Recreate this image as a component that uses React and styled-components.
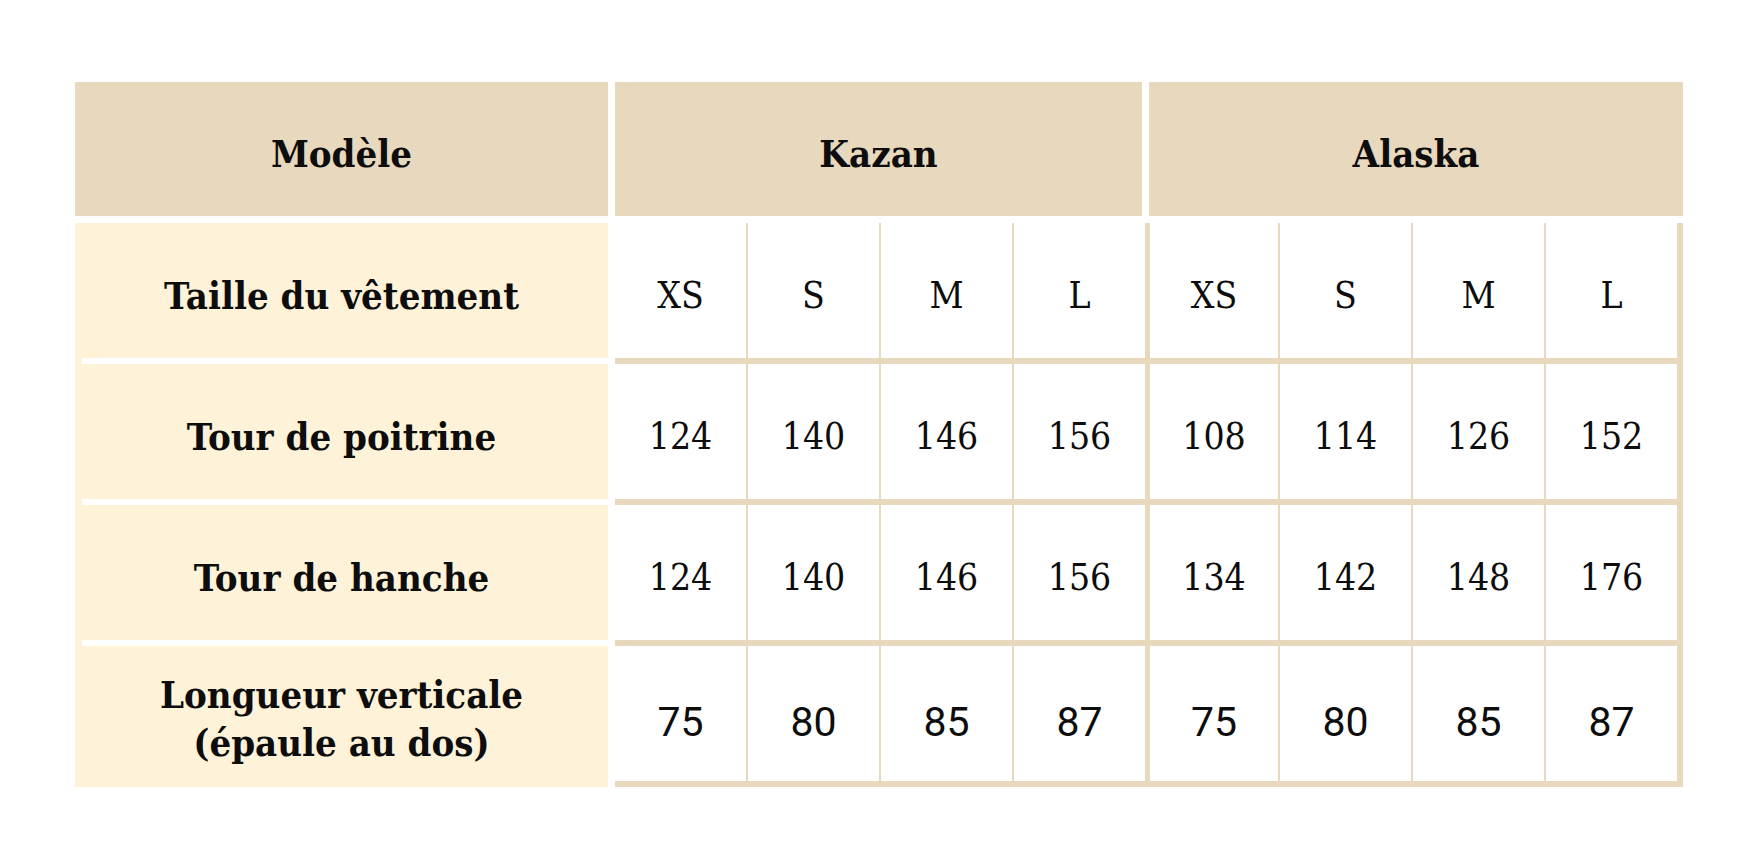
import React from 'react';
import styled, { createGlobalStyle } from 'styled-components';

const GlobalStyle = createGlobalStyle`
    html, body {
        margin: 0;
        padding: 0;
        background: #ffffff;
    }
`;

const Page = styled.div`
    padding: 82px 0 0 75px;
    font-family: "DejaVu Serif Condensed", "DejaVu Serif", serif;
    color: #0d0d0d;
`;

const Table = styled.div`
    width: 1608px;
    display: flex;
    flex-direction: column;
    gap: 7px;
`;

const HeaderRow = styled.div`
    display: grid;
    grid-template-columns: 533px 527px 534px;
    column-gap: 7px;
`;

const HeaderCell = styled.div`
    height: 134px;
    box-sizing: border-box;
    padding-top: 8px;
    background: #e8d8bd;
    display: flex;
    align-items: center;
    justify-content: center;
    font-size: 38px;
    font-weight: 700;
`;

const Body = styled.div`
    display: flex;
    gap: 7px;
`;

const LabelColumn = styled.div`
    width: 533px;
    display: flex;
    flex-direction: column;
    gap: 6px;
    /* cream strip on the left edge, the white gaps start a bit inset */
    background: linear-gradient(90deg, #fef3d8 0 7px, transparent 7px);
`;

const LabelCell = styled.div`
    height: 135px;
    box-sizing: border-box;
    padding-top: 10px;
    background: #fef3d8;
    display: flex;
    align-items: center;
    justify-content: center;
    text-align: center;
    font-size: 38px;
    font-weight: 700;
    line-height: 1.24;
    &:last-child {
        flex: 1;
        height: auto;
        padding-top: 4px;
    }
`;

const DataPanel = styled.div`
    flex: 1;
    display: grid;
    grid-template-columns: repeat(8, 1fr);
    grid-auto-rows: 135px;
    column-gap: 2px;
    row-gap: 6px;
    padding: 0 6px 6px 0;
    background: #e8d8bd;
`;

const Cell = styled.div`
    background: #ffffff;
    margin-left: ${(p) => (p.$groupStart ? '3px' : '0')};
    box-sizing: border-box;
    padding-top: ${(p) => (p.$sans ? '16px' : '10px')};
    display: flex;
    align-items: center;
    justify-content: center;
    font-family: ${(p) => (p.$sans ? 'Roboto, "Liberation Sans", sans-serif' : 'inherit')};
    font-size: ${(p) => (p.$sans ? '41px' : '37px')};
`;

const models = ['Kazan', 'Alaska'];

const rows = [
    {
        label: 'Taille du vêtement',
        values: ['XS', 'S', 'M', 'L', 'XS', 'S', 'M', 'L'],
    },
    {
        label: 'Tour de poitrine',
        values: ['124', '140', '146', '156', '108', '114', '126', '152'],
    },
    {
        label: 'Tour de hanche',
        values: ['124', '140', '146', '156', '134', '142', '148', '176'],
    },
    {
        label: ['Longueur verticale', '(épaule au dos)'],
        values: ['75', '80', '85', '87', '75', '80', '85', '87'],
        sans: true,
    },
];

const App = () => {
    return (
        <>
            <GlobalStyle />
            <Page>
                <Table>
                    <HeaderRow>
                        <HeaderCell>Modèle</HeaderCell>
                        {models.map((m) => (
                            <HeaderCell key={m}>{m}</HeaderCell>
                        ))}
                    </HeaderRow>
                    <Body>
                        <LabelColumn>
                            {rows.map((r, i) => (
                                <LabelCell key={i}>
                                    {Array.isArray(r.label) ? (
                                        <span>
                                            {r.label[0]}
                                            <br />
                                            {r.label[1]}
                                        </span>
                                    ) : (
                                        r.label
                                    )}
                                </LabelCell>
                            ))}
                        </LabelColumn>
                        <DataPanel>
                            {rows.map((r, i) =>
                                r.values.map((v, j) => (
                                    <Cell key={`${i}-${j}`} $groupStart={j === 4} $sans={r.sans}>
                                        {v}
                                    </Cell>
                                ))
                            )}
                        </DataPanel>
                    </Body>
                </Table>
            </Page>
        </>
    );
};

export default App;
